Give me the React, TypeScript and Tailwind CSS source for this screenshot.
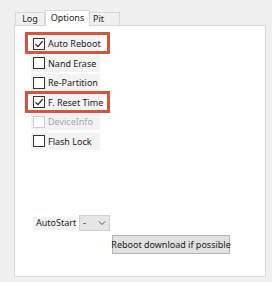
import React from "react";

function Check({ checked, disabled }: { checked?: boolean; disabled?: boolean }) {
  return (
    <span
      className={`flex h-[12px] w-[12px] shrink-0 items-center justify-center border bg-white ${
        disabled ? "border-[#cfcfcf]" : "border-[#333333]"
      }`}
    >
      {checked && (
        <svg width="10" height="10" viewBox="0 0 10 10">
          <path d="M1.5 5.2 L4 7.6 L8.6 2.2" fill="none" stroke="#222" strokeWidth="1.3" />
        </svg>
      )}
    </span>
  );
}

function Row({
  label,
  checked,
  disabled,
  marked,
}: {
  label: string;
  checked?: boolean;
  disabled?: boolean;
  marked?: boolean;
}) {
  return (
    <div className="flex h-[19.5px] items-center pl-[16px]">
      <div className="relative flex h-[17px] w-[69px] items-center bg-[#f3f3f3] pl-[2px]">
        <Check checked={checked} disabled={disabled} />
        <span
          className={`ml-[3px] whitespace-nowrap text-[9px] leading-none ${
            disabled ? "text-[#a6a6a6]" : "text-[#222]"
          }`}
        >
          {label}
        </span>
        {marked && (
          <span className="pointer-events-none absolute left-[-6px] top-[-3px] h-[22px] w-[85px] border-[3px] border-[#d4553f]" />
        )}
      </div>
    </div>
  );
}

export default function App() {
  return (
    <div
      className="h-[282px] w-[272px] bg-[#f0f0f0]"
      style={{ fontFamily: '"Noto Sans", "Open Sans", sans-serif' }}
    >
      <div className="flex h-[25px] items-end pl-[15px]">
        <div className="flex h-[13px] w-[30px] items-center justify-center border border-b-0 border-[#d9d9d9] bg-[#f0f0f0] text-[9px] text-[#222]">
          Log
        </div>
        <div className="relative z-10 mb-[-1px] flex h-[16px] w-[45px] items-start justify-center border border-b-0 border-[#d9d9d9] bg-white pt-[1px] text-[9px] leading-[12px] text-[#222]">
          Options
        </div>
        <div className="flex h-[13px] w-[30px] items-center justify-start border border-b-0 border-l-0 border-[#d9d9d9] bg-[#f0f0f0] pl-[3px] text-[9px] text-[#222]">
          Pit
        </div>
      </div>
      <div className="ml-[14px] flex h-[252px] w-[252px] flex-col border border-[#d9d9d9] bg-white pt-[8px]">
        <Row label="Auto Reboot" checked marked />
        <Row label="Nand Erase" />
        <Row label="Re-Partition" />
        <Row label="F. Reset Time" checked marked />
        <Row label="DeviceInfo" disabled />
        <Row label="Flash Lock" />
        <div className="mt-[64px] flex items-center pl-[18px]">
          <div className="flex h-[13px] w-[43px] items-center bg-[#f3f3f3] pl-[3px] text-[9px] text-[#222]">
            AutoStart
          </div>
          <div className="ml-[3px] flex h-[16px] w-[31px] items-center justify-between border border-[#cfcfcf] bg-[#e6e6e6] pl-[3px] pr-[3px] text-[9px] text-[#222]">
            <span>-</span>
            <svg width="8" height="6" viewBox="0 0 8 6">
              <path d="M1 1.5 L4 4.5 L7 1.5" fill="none" stroke="#555" strokeWidth="1" />
            </svg>
          </div>
        </div>
        <div className="mt-[4px] pl-[97px]">
          <div className="flex h-[19px] w-[118px] items-center justify-center border border-[#b5b5b5] bg-[#e1e1e1] text-[9px] text-[#222] whitespace-nowrap">
            Reboot download if possible
          </div>
        </div>
      </div>
    </div>
  );
}
